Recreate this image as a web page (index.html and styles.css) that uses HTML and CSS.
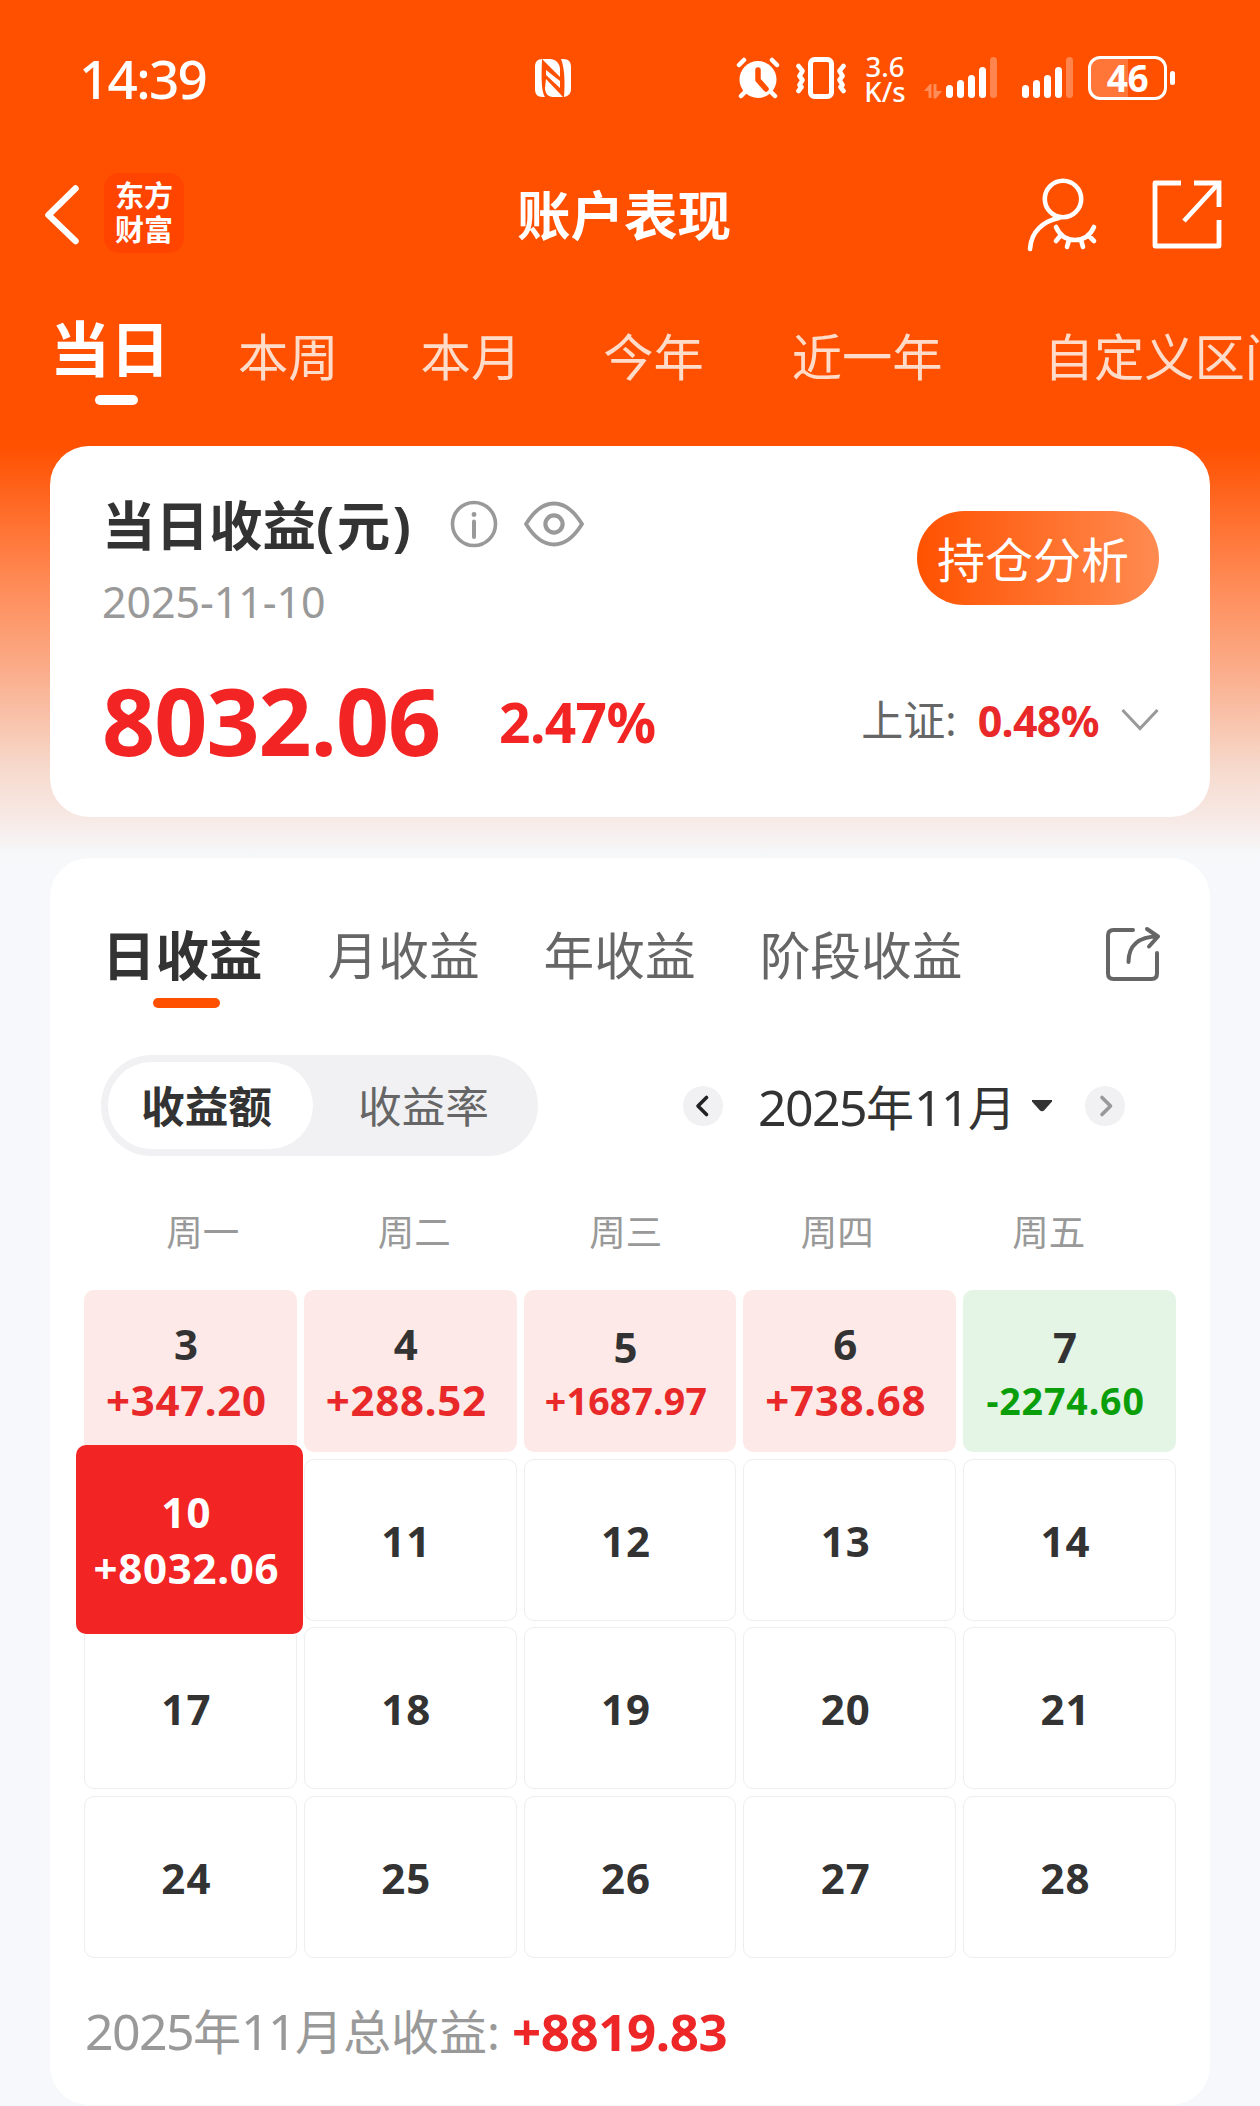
FILE: index.html
```html
<!DOCTYPE html>
<html lang="zh-CN">
<head>
<meta charset="utf-8">
<title>账户表现</title>
<link rel="stylesheet" href="styles.css">
</head>
<body>
<div class="status">
  <span class="clock">14:39</span>
  <svg class="nfc" width="38" height="40" viewBox="0 0 38 40"><path fill="#fff" d="M9 1C3 1 1 4 1 9v22c0 5 2 8 8 8h2C8 34 7 24 8 2z"/><path fill="#fff" d="M9 1h7c5 0 10 4 10 10v8L9 2zM12 12l14 11v7L12 17zM12 21l17 18H19c-5 0-8-4-8-9z"/><path fill="#fff" d="M27 1h2c6 0 8 3 8 8v22c0 4-2 7-7 8 1-12 1-28-3-38z"/></svg>
  <svg class="alarm" width="44" height="42" viewBox="0 0 44 42"><circle cx="22" cy="22.500" r="18.500" fill="#fff"/><g fill="none" stroke="#fff" stroke-width="4.500" stroke-linecap="round"><path d="M3 8l5-5M41 8l-5-5M9 35l-4 4M35 35l4 4"/></g><path d="M22 13v10l8 9" fill="none" stroke="#ff5000" stroke-width="5.500" stroke-linecap="round" stroke-linejoin="round"/></svg>
  <svg class="vibrate" width="50" height="44" viewBox="0 0 50 44"><rect x="14.500" y="3.500" width="21" height="37" rx="4" fill="none" stroke="#fff" stroke-width="5"/><g fill="none" stroke="#fff" stroke-width="4.600" stroke-linecap="round" stroke-linejoin="round"><path d="M2.500 10l4 5-3 5 3 4-3 5 2 2-3 4M47.500 10l-4 5 3 5-3 4 3 5-2 2 3 4"/></g></svg>
  <span class="speed"><span>3.6</span><span>K/s</span></span>
  <svg class="signal-data" width="74" height="42" viewBox="0 0 74 42"><g fill="#fff"><path opacity=".35" d="M0 34l6-7h1.500v14H4.500v-7zM9.500 27h3v7h5.500l-6 7.500H9.500z"/><rect x="22" y="28" width="7" height="13" rx="3.500"/><rect x="33" y="23" width="7" height="18" rx="3.500"/><rect x="44" y="18" width="7" height="23" rx="3.500"/><rect x="55" y="10" width="7" height="31" rx="3.500"/><rect opacity=".3" x="66" y="0" width="7" height="41" rx="3.500"/></g></svg>
  <svg class="signal" width="52" height="42" viewBox="0 0 52 42"><g fill="#fff"><rect x="0" y="28" width="7" height="13" rx="3.500"/><rect x="11" y="23" width="7" height="18" rx="3.500"/><rect x="22" y="18" width="7" height="23" rx="3.500"/><rect x="33" y="10" width="7" height="31" rx="3.500"/><rect opacity=".3" x="44" y="0" width="7" height="41" rx="3.500"/></g></svg>
  <span class="battery">46</span>
  <span class="battery-tip"></span>
</div>

<div class="header">
  <svg class="back" width="40" height="64" viewBox="0 0 40 64"><path d="M33.500 5.500L6.500 32l27 26" fill="none" stroke="#fff" stroke-width="6.500" stroke-linecap="round" stroke-linejoin="round"/></svg>
  <span class="logo"><span>东方</span><span>财富</span></span>
  <h1 class="title">账户表现</h1>
  <svg class="person" width="72" height="76" viewBox="0 0 72 76"><g fill="none" stroke="#fff" stroke-width="4.600" stroke-linecap="round" stroke-linejoin="round"><circle cx="36" cy="22" r="18.200"/><path d="M32 41C17 44 4 54 3 72"/><path d="M29 50c4 9 11 13 19 13s15-4 19-13M34 58l-5 6M42 63l-2 7M54 63l2 7M61 58l6 6"/></g></svg>
  <svg class="share" width="70" height="70" viewBox="0 0 70 70"><g fill="none" stroke="#fff" stroke-width="4.800" stroke-linejoin="round"><path d="M29 3H3v63h64V40"/><path d="M42 3h25v24" stroke-linejoin="miter"/><path d="M66 4L32 41"/></g></svg>
</div>

<div class="ranges">
  <span class="range active">当日</span>
  <span class="range">本周</span>
  <span class="range">本月</span>
  <span class="range">今年</span>
  <span class="range year">近一年</span>
  <span class="range custom">自定义区间</span>
</div>

<div class="card summary">
  <div class="summary-top">
    <div class="summary-name">
      <div class="name-row">
        <h2 class="name">当日收益<span class="unit">(元)</span></h2>
        <svg class="info" width="48" height="48" viewBox="0 0 48 48"><circle cx="24" cy="24" r="21.500" fill="none" stroke="#999" stroke-width="3.600"/><circle cx="24" cy="14.500" r="2.400" fill="#999"/><path d="M24 21.500v15.500" stroke="#999" stroke-width="4" stroke-linecap="round"/></svg>
        <svg class="eye" width="60" height="48" viewBox="0 0 60 48"><path d="M2 24C10 11 19 3.500 30 3.500S50 11 58 24C50 37 41 44.500 30 44.500S10 37 2 24z" fill="none" stroke="#999" stroke-width="3.800" stroke-linejoin="round"/><circle cx="30" cy="24" r="8.600" fill="none" stroke="#999" stroke-width="4.200"/></svg>
      </div>
      <div class="date">2025-11-10</div>
    </div>
    <span class="analyze">持仓分析</span>
  </div>
  <div class="figures">
    <span class="amount">8032.06</span>
    <span class="rate">2.47%</span>
    <span class="index-name">上证:</span>
    <span class="index-rate">0.48%</span>
    <svg class="down" width="38" height="24" viewBox="0 0 38 24"><path d="M1.500 2L19 20.500 36.500 2" fill="none" stroke="#999" stroke-width="3"/></svg>
  </div>
</div>

<div class="card detail">
  <div class="tabs">
    <span class="tab active">日收益</span>
    <span class="tab">月收益</span>
    <span class="tab">年收益</span>
    <span class="tab">阶段收益</span>
    <svg class="export" width="56" height="56" viewBox="0 0 56 56"><g fill="none" stroke="#666" stroke-width="4" stroke-linecap="round" stroke-linejoin="round"><path d="M28 4H8.500Q3 4 3 9.500v38Q3 53 8.500 53h38Q52 53 52 47.500V27"/><path d="M23.500 36C23.500 20 33 10.500 53 10.500M42 3l11 7.500-9 10"/></g></svg>
  </div>

  <div class="controls">
    <div class="toggle"><span class="option on">收益额</span><span class="option">收益率</span></div>
    <span class="step prev"><svg width="40" height="40" viewBox="0 0 40 40"><path d="M23.500 11.500L15 20l8.500 8.500" fill="none" stroke="#222" stroke-width="3.600" stroke-linecap="round" stroke-linejoin="round"/></svg></span>
    <span class="month"><b>2025</b>年<b>11</b>月</span>
    <svg class="caret" width="20" height="12" viewBox="0 0 20 12"><path d="M0 0h20v1.500L12.500 10Q10 12.500 7.500 10L0 1.500z" fill="#333"/></svg>
    <span class="step next"><svg width="40" height="40" viewBox="0 0 40 40"><path d="M17 11.500l8.500 8.500-8.500 8.500" fill="none" stroke="#999" stroke-width="3.600" stroke-linecap="round" stroke-linejoin="round"/></svg></span>
  </div>

  <div class="weekdays"><span>周一</span><span>周二</span><span>周三</span><span>周四</span><span>周五</span></div>

  <div class="calendar">
    <div class="day gain"><span class="num">3</span><span class="pl">+347.20</span></div>
    <div class="day gain"><span class="num">4</span><span class="pl">+288.52</span></div>
    <div class="day gain small"><span class="num">5</span><span class="pl">+1687.97</span></div>
    <div class="day gain"><span class="num">6</span><span class="pl">+738.68</span></div>
    <div class="day loss small"><span class="num">7</span><span class="pl">-2274.60</span></div>
    <div class="day selected"><span class="num">10</span><span class="pl">+8032.06</span></div>
    <div class="day"><span class="num">11</span></div>
    <div class="day"><span class="num">12</span></div>
    <div class="day"><span class="num">13</span></div>
    <div class="day"><span class="num">14</span></div>
    <div class="day"><span class="num">17</span></div>
    <div class="day"><span class="num">18</span></div>
    <div class="day"><span class="num">19</span></div>
    <div class="day"><span class="num">20</span></div>
    <div class="day"><span class="num">21</span></div>
    <div class="day"><span class="num">24</span></div>
    <div class="day"><span class="num">25</span></div>
    <div class="day"><span class="num">26</span></div>
    <div class="day"><span class="num">27</span></div>
    <div class="day"><span class="num">28</span></div>
  </div>

  <div class="total"><span class="total-name"><b>2025</b>年<b>11</b>月总收益:</span><span class="total-value">+8819.83</span></div>
</div>
</body>
</html>
```
FILE: styles.css
```css
* {
  box-sizing: border-box;
}

body {
  margin: 0;
  width: 1260px;
  height: 2106px;
  overflow: hidden;
  font-family: "Noto Sans", "Noto Sans CJK SC", sans-serif;
  line-height: 1;
  white-space: nowrap;
  color: #333;
  background: linear-gradient(#ff5000 446px, #ff864f 572px, #fbac8a 670px, #f6dacd 770px, #f7e9e5 818px, #f6f8fa 855px, #f6f8fb 900px);
}

svg {
  display: block;
  flex: none;
}

h1, h2 {
  margin: 0;
}

/* Status bar */
.status {
  display: flex;
  align-items: center;
  height: 156px;
  padding-left: 79px;
  color: #fff;
}

.clock {
  width: 455px;
  font-size: 53px;
  font-weight: 500;
  letter-spacing: -1.7px;
}

.alarm { margin-left: 164px; }
.vibrate { margin-left: 16px; }

.speed {
  display: flex;
  flex-direction: column;
  width: 42px;
  margin-left: 18px;
  padding-top: 1px;
  font-size: 27.500px;
  line-height: 25px;
  text-align: center;
  font-weight: 500;
}

.signal-data { margin-left: 18px; }
.signal { margin-left: 24px; }

.battery {
  width: 79px;
  height: 44px;
  margin-left: 14px;
  border: 3.500px solid #fff;
  border-radius: 12px;
  background: linear-gradient(90deg, rgba(255, 255, 255, .22) 50%, transparent 50%);
  font-size: 37px;
  font-weight: 700;
  line-height: 37px;
  letter-spacing: -.5px;
  text-align: center;
}

.battery-tip {
  width: 5px;
  height: 14px;
  margin-left: 3px;
  border-radius: 3px;
  background: #fff;
}

/* Title bar */
.header {
  display: flex;
  align-items: center;
  height: 117px;
  padding: 0 38px 0 42px;
}

.logo {
  display: flex;
  flex-direction: column;
  align-items: center;
  justify-content: center;
  width: 80px;
  height: 80px;
  margin: -3px 0 0 22px;
  border-radius: 15px;
  background: #ff4400;
  color: #fff;
  font-size: 29px;
  line-height: 34px;
  font-weight: 700;
}

.title {
  margin: 3px 0 0 333px;
  color: #fff;
  font-size: 53.500px;
  font-weight: 700;
}

.person { margin-left: auto; }
.share { margin-left: 53px; }

/* Range tabs */
.ranges {
  display: flex;
  height: 173px;
  padding: 40px 0 0 50px;
  overflow: hidden;
}

.range {
  flex: none;
  margin: 8px 0 0 82px;
  color: #ffdcc9;
  font-size: 50.300px;
  line-height: 72px;
}

.range.active {
  display: flex;
  flex-direction: column;
  align-items: center;
  margin: 0 -14px 0 0;
  color: #fff;
  font-size: 60px;
  font-weight: 700;
}

.range.active::after {
  content: "";
  width: 43px;
  height: 10px;
  margin: 10px 0 0 12px;
  border-radius: 5px;
  background: #fff;
}

.range.year { margin-left: 88px; }
.range.custom { margin-left: 101px; }

.card {
  width: 1160px;
  margin: 0 auto;
  border-radius: 39px;
  background: #fff;
}

/* Summary */
.summary {
  height: 371px;
  padding: 46px 51px 0 52px;
}

.summary-top {
  display: flex;
  justify-content: space-between;
}

.name-row {
  display: flex;
  align-items: center;
  height: 64px;
}

.name {
  width: 348px;
  padding-top: 3px;
  font-size: 53.500px;
  font-weight: 700;
}

.unit { letter-spacing: 2.500px; }

.eye { margin-left: 26px; }

.date {
  height: 94px;
  color: #999;
  font-size: 43px;
  line-height: 92px;
  letter-spacing: -.1px;
}

.analyze {
  width: 242px;
  height: 94px;
  margin-top: 19px;
  padding-left: 20px;
  border-radius: 47px;
  background: linear-gradient(90deg, #ff5200, #ff8b51);
  color: #fff;
  font-size: 48px;
  line-height: 97px;
}

.figures {
  display: flex;
  align-items: center;
  height: 118px;
  margin-top: 11px;
  color: #f32424;
  font-weight: 700;
}

.amount {
  width: 399px;
  font-size: 93px;
  letter-spacing: -1px;
}

.rate {
  width: 364px;
  padding-top: 2px;
  font-size: 55px;
  letter-spacing: -.6px;
}

.index-name {
  width: 117px;
  color: #666;
  font-size: 42px;
  font-weight: 400;
}

.index-rate {
  width: 144px;
  color: #e92929;
  font-size: 43px;
  letter-spacing: -.7px;
}

/* Detail */
.detail {
  height: 1247px;
  margin-top: 41px;
  padding: 60px 34px 0;
}

.tabs {
  display: flex;
  height: 100px;
  padding-left: 18px;
}

.tab {
  margin-left: 64px;
  color: #666;
  font-size: 50.700px;
  line-height: 75px;
}

.tab.active {
  display: flex;
  flex-direction: column;
  align-items: center;
  margin: 0 1px 0 0;
  color: #333;
  font-size: 53.500px;
  line-height: 76px;
  font-weight: 700;
}

.tab.active::after {
  content: "";
  width: 67px;
  height: 10px;
  margin: 4px 0 0 9px;
  border-radius: 5px;
  background: #ff5000;
}

.export { margin: 8px 15px 0 auto; }

.controls {
  display: flex;
  align-items: center;
  height: 101px;
  margin-top: 37px;
  padding-left: 17px;
}

.toggle {
  display: flex;
  width: 437px;
  height: 101px;
  padding: 7px;
  border-radius: 51px;
  background: #f1f1f4;
}

.option {
  width: 205px;
  padding-left: 2px;
  border-radius: 44px;
  color: #666;
  font-size: 43.700px;
  line-height: 88px;
  text-align: center;
}

.option + .option { margin-left: 7px; }

.option.on {
  padding: 0 8px 0 0;
  background: #fff;
  color: #333;
  font-weight: 700;
}

.step {
  width: 40px;
  height: 40px;
  border-radius: 50%;
  background: #f1f1f4;
}

.prev { margin-left: 145px; }

.month {
  width: 252px;
  margin-left: 35px;
  padding-top: 2px;
  font-size: 48px;
}

.month b, .total b {
  font-size: 50px;
  font-weight: 400;
  letter-spacing: -1.600px;
}

.caret { margin-left: 22px; }
.next { margin-left: 33px; }

.weekdays {
  display: grid;
  grid-template-columns: repeat(5, 211.500px);
  height: 134px;
  padding: 22px 0 0 13px;
  color: #999;
  font-size: 36.500px;
  line-height: 108px;
  text-align: center;
}

.calendar {
  display: grid;
  grid-template-columns: repeat(5, 1fr);
  grid-auto-rows: 162px;
  gap: 6.700px 7px;
}

.day {
  display: flex;
  flex-direction: column;
  align-items: center;
  justify-content: center;
  padding: 2px 8px 0 0;
  border: 1.500px solid #eee;
  border-radius: 10px;
  font-size: 42px;
  font-weight: 700;
  line-height: 56px;
  letter-spacing: 1px;
}

.gain {
  border: 0;
  background: #fde9e8;
}

.pl { letter-spacing: .7px; }

.gain .pl { color: #e92929; }

.loss {
  border: 0;
  background: #e4f4e5;
}

.loss .pl { color: #0a9f0a; }

.day.small { padding-top: 4px; }

.small .pl {
  font-size: 37.500px;
  line-height: 52px;
  letter-spacing: .2px;
}

.loss.small .pl { letter-spacing: .9px; }

.day.selected {
  z-index: 1;
  margin: -14px -6px -13px -8px;
  padding: 2px 6px 0 0;
  border: 0;
  background: #f32424;
  color: #fff;
}

.total {
  display: flex;
  align-items: center;
  height: 146px;
  padding-left: 1px;
  color: #999;
  font-size: 48px;
}

.total-name { width: 427px; }

.total-value {
  color: #ed2727;
  font-size: 51px;
  font-weight: 700;
  letter-spacing: -.4px;
}
```
